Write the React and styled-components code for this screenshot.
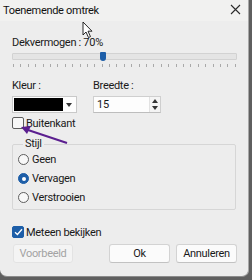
import styled, { createGlobalStyle } from "styled-components";

const Global = createGlobalStyle`
  html, body {
    margin: 0;
    padding: 0;
    background: #5f5f5f;
  }
  body {
    width: 252px;
    height: 280px;
    overflow: hidden;
    font-family: Roboto, "Liberation Sans", Arial, sans-serif;
  }
`;

const ticks = Array.from({ length: 31 });

const App = () => {
  return (
    <>
      <Global />
      <Window>
        <TitleBar>
          <span>Toenemende omtrek</span>
          <Close>
            <svg width="11" height="11" viewBox="0 0 11 11">
              <path d="M1 1 L10 10 M10 1 L1 10" stroke="#2b2b2b" strokeWidth="1.1" />
            </svg>
          </Close>
        </TitleBar>
        <Body>
          <Label>Dekvermogen : 70%</Label>
          <Slider>
            <Track />
            <Thumb style={{ left: "88px" }} />
          </Slider>
          <Ticks>
            {ticks.map((_, i) => (
              <Tick key={i} />
            ))}
          </Ticks>

          <FieldRow>
            <Field $width="65px">
              <Label>Kleur :</Label>
              <ColorBox>
                <Swatch />
                <DropArrow>
                  <svg width="6" height="4" viewBox="0 0 6 4">
                    <path d="M0 0 L6 0 L3 4 Z" fill="#333" />
                  </svg>
                </DropArrow>
              </ColorBox>
            </Field>
            <Field $width="68px">
              <Label>Breedte :</Label>
              <NumberBox>
                <span>15</span>
                <Spinner>
                  <SpinBtn>
                    <svg width="6" height="4" viewBox="0 0 6 4">
                      <path d="M0 4 L6 4 L3 0 Z" fill="#333" />
                    </svg>
                  </SpinBtn>
                  <SpinBtn>
                    <svg width="6" height="4" viewBox="0 0 6 4">
                      <path d="M0 0 L6 0 L3 4 Z" fill="#333" />
                    </svg>
                  </SpinBtn>
                </Spinner>
              </NumberBox>
            </Field>
          </FieldRow>

          <CheckRow $top="4px">
            <CheckBox />
            <span>Buitenkant</span>
          </CheckRow>

          <Group>
            <legend>Stijl</legend>
            <RadioRow>
              <Radio />
              <span>Geen</span>
            </RadioRow>
            <RadioRow>
              <Radio $checked />
              <span>Vervagen</span>
            </RadioRow>
            <RadioRow>
              <Radio />
              <span>Verstrooien</span>
            </RadioRow>
          </Group>

          <CheckRow $top="16px">
            <CheckBox $checked>
              <svg width="9" height="8" viewBox="0 0 9 8">
                <path d="M1 4.2 L3.4 6.5 L8 1.3" stroke="#fff" strokeWidth="1.3" fill="none" />
              </svg>
            </CheckBox>
            <span>Meteen bekijken</span>
          </CheckRow>

          <Buttons>
            <Button $width="60px" disabled>
              Voorbeeld
            </Button>
            <Spacer />
            <Button $width="61px">Ok</Button>
            <Button $width="61px">Annuleren</Button>
          </Buttons>
        </Body>

        <Arrow width="60" height="24" viewBox="0 0 60 24">
          <path d="M50 17 L11 4" stroke="#5b1f8f" strokeWidth="2" />
          <path d="M4 1 L14 0 L10 8 Z" fill="#5b1f8f" />
        </Arrow>

        <Cursor width="12" height="18" viewBox="0 0 12 18">
          <path
            d="M1 1 L1 14 L4 11 L6.5 16.5 L8.5 15.6 L6 10.2 L10 10.2 Z"
            fill="#fff"
            stroke="#111"
            strokeWidth="0.9"
          />
        </Cursor>
      </Window>
    </>
  );
};

export default App;

const Window = styled.div`
  position: relative;
  width: 249px;
  height: 277px;
  background: #ededed;
  border-right: 1px solid #a8a8a8;
  border-bottom: 1px solid #8c8c8c;
  border-radius: 0 0 7px 7px;
  box-sizing: border-box;
  display: flex;
  flex-direction: column;
  overflow: hidden;
  font-size: 11px;
  letter-spacing: -0.3px;
  color: #1a1a1a;
`;

const TitleBar = styled.div`
  height: 21px;
  flex: none;
  background: #f1f1f0;
  display: flex;
  align-items: center;
  justify-content: space-between;
  padding: 0 5px 0 3px;
  font-size: 11px;
  color: #111;
  > span {
    margin-top: -1px;
  }
`;

const Close = styled.div`
  width: 16px;
  height: 16px;
  display: flex;
  align-items: center;
  justify-content: center;
  margin-top: -3px;
`;

const Body = styled.div`
  padding: 15px 12px 0 12px;
  display: flex;
  flex-direction: column;
`;

const Label = styled.div`
  line-height: 14px;
  height: 14px;
  white-space: nowrap;
`;

const Slider = styled.div`
  position: relative;
  margin-top: 2px;
  height: 9px;
  width: 225px;
`;

const Track = styled.div`
  position: absolute;
  left: 0;
  right: 0;
  top: 1px;
  height: 5px;
  background: #e4e4e4;
  border: 1px solid #d2d2d2;
  border-radius: 1px;
`;

const Thumb = styled.div`
  position: absolute;
  top: 0;
  width: 6px;
  height: 9px;
  background: #1d5ea8;
  border-radius: 1px 1px 3px 3px;
`;

const Ticks = styled.div`
  margin-top: 3px;
  width: 223px;
  margin-left: 1px;
  height: 3px;
  display: flex;
  justify-content: space-between;
`;

const Tick = styled.div`
  width: 1px;
  height: 3px;
  background: #a9a9a9;
`;

const FieldRow = styled.div`
  display: flex;
  gap: 16px;
  margin-top: 12px;
`;

const Field = styled.div`
  width: ${(p) => p.$width};
  display: flex;
  flex-direction: column;
  gap: 3px;
`;

const ColorBox = styled.div`
  height: 17px;
  border: 1px solid #c9c9c9;
  background: #fdfdfd;
  display: flex;
  align-items: stretch;
  padding: 1px;
  box-sizing: border-box;
`;

const Swatch = styled.div`
  flex: 1;
  background: #000;
`;

const DropArrow = styled.div`
  width: 12px;
  display: flex;
  align-items: center;
  justify-content: center;
`;

const NumberBox = styled.div`
  height: 17px;
  border: 1px solid #cfcfcf;
  border-bottom-color: #bdbdbd;
  background: #fdfdfd;
  box-sizing: border-box;
  display: flex;
  align-items: center;
  justify-content: space-between;
  padding-left: 3px;
`;

const Spinner = styled.div`
  width: 11px;
  height: 100%;
  display: flex;
  flex-direction: column;
`;

const SpinBtn = styled.div`
  flex: 1;
  display: flex;
  align-items: center;
  justify-content: center;
  background: #f4f4f4;
  border-left: 1px solid #e2e2e2;
`;

const CheckRow = styled.div`
  display: flex;
  align-items: center;
  gap: 2px;
  margin-top: ${(p) => p.$top};
  height: 12px;
  margin-left: 0;
`;

const CheckBox = styled.div`
  width: 10px;
  height: 10px;
  border: 1px solid ${(p) => (p.$checked ? "#1d5ea8" : "#5e5e5e")};
  background: ${(p) => (p.$checked ? "#1d5ea8" : "#f8f8f8")};
  border-radius: 2px;
  display: flex;
  align-items: center;
  justify-content: center;
`;

const Group = styled.fieldset`
  margin: 9px 0 0 0;
  padding: 3px 0 5px 5px;
  border: 1px solid #d6d6d6;
  border-radius: 2px;
  width: 224px;
  box-sizing: border-box;
  display: flex;
  flex-direction: column;
  gap: 6px;
  > legend {
    padding: 0 2px;
    margin-left: 5px;
    line-height: 12px;
  }
`;

const RadioRow = styled.div`
  display: flex;
  align-items: center;
  gap: 3px;
  height: 13px;
`;

const Radio = styled.div`
  width: 11px;
  height: 11px;
  border-radius: 50%;
  box-sizing: border-box;
  border: 1px solid ${(p) => (p.$checked ? "#1d5ea8" : "#5e5e5e")};
  background: ${(p) => (p.$checked ? "#1d5ea8" : "#f8f8f8")};
  display: flex;
  align-items: center;
  justify-content: center;
  &::after {
    content: "";
    display: ${(p) => (p.$checked ? "block" : "none")};
    width: 4px;
    height: 4px;
    border-radius: 50%;
    background: #fff;
  }
`;

const Buttons = styled.div`
  display: flex;
  gap: 6px;
  margin-top: 6px;
  margin-left: 1px;
  width: 224px;
`;

const Spacer = styled.div`
  flex: 1;
`;

const Button = styled.button`
  width: ${(p) => p.$width};
  height: 19px;
  padding: 0;
  font-family: Roboto, "Liberation Sans", Arial, sans-serif;
  font-size: 11px;
  letter-spacing: -0.3px;
  color: #1a1a1a;
  background: #fbfbfb;
  border: 1px solid #d3d3d3;
  border-bottom-color: #c2c2c2;
  border-radius: 3px;
  &:disabled {
    color: #a3a3a3;
    background: #f4f4f4;
    border-color: #e3e3e3;
  }
`;

const Arrow = styled.svg`
  position: absolute;
  left: 17px;
  top: 126px;
  overflow: visible;
`;

const Cursor = styled.svg`
  position: absolute;
  left: 82px;
  top: 21px;
`;
